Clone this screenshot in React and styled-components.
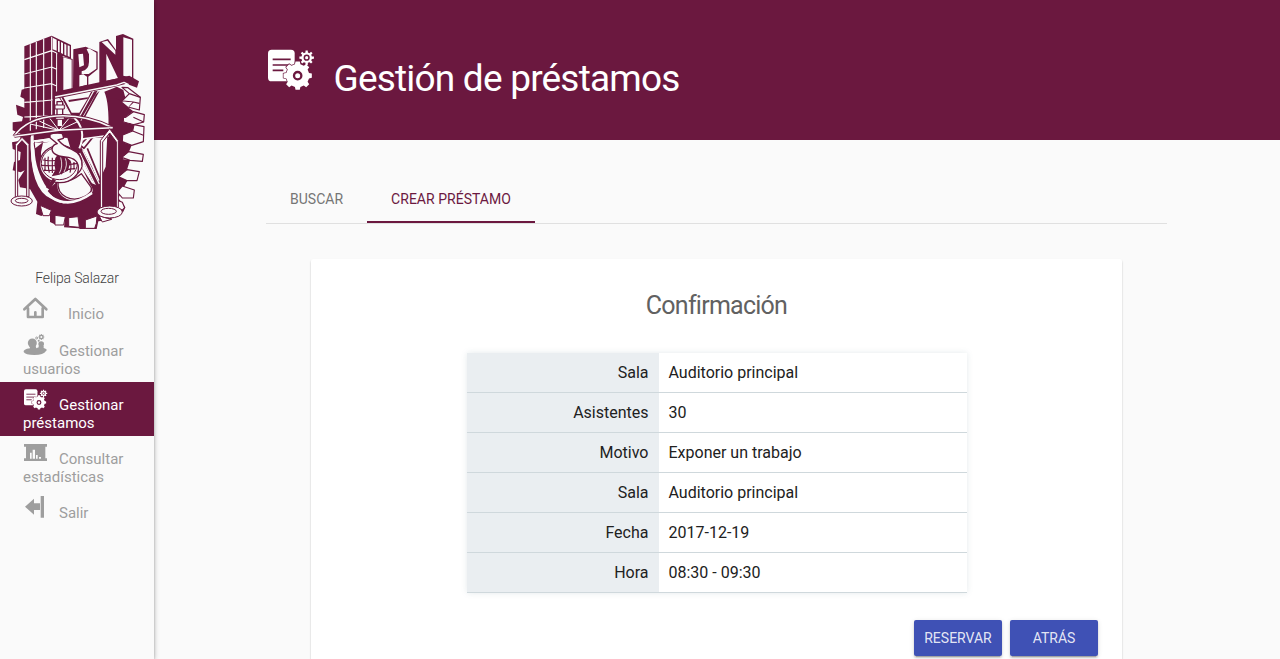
import React from "react";
import styled, { createGlobalStyle } from "styled-components";

const WINE = "#6b183f";
const PAPER = "#fafafa";

const GlobalStyle = createGlobalStyle`
  * { box-sizing: border-box; }
  body {
    margin: 0;
    background: ${PAPER};
    font-family: Roboto, "Liberation Sans", sans-serif;
    overflow: hidden;
  }
`;

const Shell = styled.div`
  display: flex;
  height: 659px;
  overflow: hidden;
`;

const Sidebar = styled.aside`
  position: relative;
  z-index: 1;
  flex: 0 0 154px;
  background: ${PAPER};
  box-shadow: 0 2px 2px 0 rgba(0, 0, 0, 0.14), 0 3px 1px -2px rgba(0, 0, 0, 0.2), 0 1px 5px 0 rgba(0, 0, 0, 0.32);
`;

const Logo = styled.svg`
  display: block;
  width: 135px;
  height: 198px;
  margin: 33px 0 0 10px;
`;

const UserName = styled.div`
  height: 61px;
  padding-top: 38px;
  text-align: center;
  font-size: 14px;
  line-height: 18px;
  font-weight: 300;
  letter-spacing: -0.01em;
  color: #424242;
`;

const NavItem = styled.a`
  display: block;
  padding: 0 0 4px 23px;
  font-size: 15px;
  line-height: 18px;
  color: ${(p) => (p.$active ? "#fff" : "#9e9e9e")};
  background: ${(p) => (p.$active ? WINE : "transparent")};
`;

const NavLine = styled.div`
  display: flex;
  align-items: flex-end;
  height: 32px;
  gap: ${(p) => p.$gap || 12}px;
`;

const NavText = styled.span`
  margin-bottom: ${(p) => p.$lift || 0}px;
`;

const NavIcon = styled.svg`
  width: 24px;
  height: 22px;
  margin-bottom: 4px;
  overflow: visible;
  fill: currentColor;
`;

const Main = styled.main`
  flex: 1;
  min-width: 0;
`;

const Banner = styled.header`
  display: flex;
  align-items: flex-start;
  height: 140px;
  padding: 49px 0 0 114px;
  background: ${WINE};
  color: #fff;
`;

const BannerIcon = styled.svg`
  width: 46px;
  height: 42px;
  overflow: visible;
  fill: currentColor;
`;

const Title = styled.h1`
  margin: 6px 0 0 19.5px;
  font-size: 37px;
  line-height: 48px;
  font-weight: 400;
  letter-spacing: -0.0215em;
`;

const Content = styled.div`
  width: 901px;
  margin: 36px 0 0 112px;
`;

const Tabs = styled.nav`
  display: flex;
  height: 48px;
  border-bottom: 1px solid #e0e0e0;
`;

const Tab = styled.a`
  height: 47px;
  padding: 0 24px;
  font-size: 14px;
  line-height: 47px;
  letter-spacing: 0.02px;
  text-transform: uppercase;
  color: ${(p) => (p.$active ? WINE : "#757575")};
  box-shadow: ${(p) => (p.$active ? `inset 0 -2px 0 ${WINE}` : "none")};
`;

const Card = styled.section`
  width: 811px;
  height: 420px;
  margin: 35px auto 0;
  padding: 29px 24px 0;
  border-radius: 2px;
  background: #fff;
  box-shadow: 0 2px 2px 0 rgba(0, 0, 0, 0.14), 0 3px 1px -2px rgba(0, 0, 0, 0.2), 0 1px 2px 0 rgba(0, 0, 0, 0.12);
`;

const CardTitle = styled.h2`
  margin: 0 0 29px;
  text-align: center;
  font-size: 25px;
  line-height: 36px;
  font-weight: 400;
  letter-spacing: -0.03em;
  color: #616161;
`;

const Details = styled.dl`
  width: 500px;
  margin: 0 auto;
  box-shadow: 0 0 6px rgba(96, 125, 139, 0.16);
`;

const Row = styled.div`
  display: grid;
  grid-template-columns: 192px 1fr;
  grid-template-rows: 39px;
  border-bottom: 1px solid #cfd8dc;
  font-size: 16px;
  line-height: 40px;
  color: #212121;
`;

const Label = styled.dt`
  padding-right: 10px;
  text-align: right;
  background: #eaeef1;
`;

const Value = styled.dd`
  margin: 0;
  padding-left: 10px;
`;

const Actions = styled.div`
  display: flex;
  justify-content: flex-end;
  gap: 8px;
  margin-top: 27px;
`;

const Button = styled.button`
  width: 88px;
  height: 36px;
  padding: 0;
  border: 0;
  border-radius: 2px;
  background: #3f51b5;
  color: rgba(255, 255, 255, 0.87);
  font: 400 14px/36px Roboto, "Liberation Sans", sans-serif;
  text-transform: uppercase;
  box-shadow: 0 2px 2px 0 rgba(0, 0, 0, 0.14), 0 3px 1px -2px rgba(0, 0, 0, 0.2), 0 1px 5px 0 rgba(0, 0, 0, 0.12);
`;

function gearPath(cx, cy, outer, inner, teeth) {
  const pts = [];
  const step = (Math.PI * 2) / teeth;
  for (let i = 0; i < teeth; i++) {
    [[-0.3, inner], [-0.19, outer], [0.19, outer], [0.3, inner]].forEach(([f, r]) => {
      const a = i * step + f * step - Math.PI / 2;
      pts.push(`${(cx + r * Math.cos(a)).toFixed(1)} ${(cy + r * Math.sin(a)).toFixed(1)}`);
    });
  }
  return `M${pts.join("L")}Z`;
}

const LoanArt = () => (
  <>
    <rect x="0" y="2" width="80" height="95" rx="11" />
    <path d="M14 31H68M14 48H60M14 64H46" stroke={WINE} strokeWidth="5" fill="none" />
    <path d={gearPath(89, 80, 43, 35, 8)} stroke={WINE} strokeWidth="4" paintOrder="stroke" />
    <circle cx="89" cy="80" r="11" fill="none" stroke={WINE} strokeWidth="7" />
    <path d={gearPath(116, 26, 22, 16, 8)} />
    <circle cx="116" cy="26" r="7" fill="none" stroke={WINE} strokeWidth="4.5" />
  </>
);

const IpnLogo = () => (
  <Logo viewBox="30 39 405 594" fill={WINE} stroke="none" strokeLinejoin="round">
    {/* gear body */}
    <path d="M75 206L65 209L61 230L75 238V264L48 254L52 284L69 291L66 304L38 307V331L62 342L60 362L36 367L38 387L62 396L60 420L42 426L38 451L62 457L74 451L55 480L60 502L90 507L112 545L108 582L124 588L150 574V606L164 613L195 594L192 622L236 625L240 627H290L295 604L327 600L370 575L376 562L355 535L370 505L382 482L380 450L362 430L380 395L362 330L362 280L384 264L370 210L330 190L165 225Z" />

    {/* right-hand gear teeth in relief */}
    <g fill={PAPER} stroke={WINE} strokeWidth="3.5">
      <path d="M366 202L384 203L421 232L418 270L384 261L366 243L388 221Z" />
      <path d="M377 292L400 275L433 284L431 306L402 314L371 306Z" />
      <path d="M402 314L432 320L430 365L395 376L367 365L368 345L398 333Z" />
      <path d="M365 412L386 395L430 403L427 424L390 421Z" />
      <path d="M356 470L381 449L418 455L411 482H382Z" />
      <path d="M352 516L367 498L403 510L400 534H367Z" />
      <path d="M350 540L367 547L374 563L368 570L351 565Z" />
      <path fill="none" d="M388 221L421 232M370 243L400 246L418 250M400 246L384 261M400 292L431 306M398 333L430 346" />
    </g>
    <path d="M350 236L370 245L384 262L400 274L376 292L370 306L402 314L398 332L368 346L366 366L395 376L387 395L362 416L390 421L381 449L354 470L382 482L367 498L350 516L330 540V236Z" />
    <path d="M366 245L397 247L385 261ZM372 294L400 293L402 312L372 304Z" fill={PAPER} />

    {/* bottom teeth faces */}
    <g fill={PAPER} stroke={WINE} strokeWidth="3">
      <path d="M120 556L154 571L148 587H129ZM165 586L196 590L191 615H165ZM206 593L234 590L238 622L206 619ZM256 600L291 588L289 610L284 625H256ZM297 587L322 595L335 598L307 606Z" />
    </g>

    {/* beams behind the shield */}
    <path fill={PAPER} d="M160 234L360 196L340 205L313 215Q328 250 325 330L326 350L100 365L160 300Z" />
    <path d="M176 232L190 231L215 278H238L262 238L273 216L293 212L241 302L232 312ZM205 240L264 232L262 237L207 246ZM288 222L299 212L256 290L262 300L325 315V350H100L103 318L165 290L230 296L244 302Z" />
    <path fill="none" stroke={PAPER} strokeWidth="3.500" d="M281 213L236 294M182 232L215 292" />

    {/* shield */}
    <path fill={PAPER} d="M92 350Q88 510 155 537Q190 561 247 545L285 510L317 440L322 345Z" />
    <path d="M102 350L106 385L126 369L150 365L102 369ZM100 369L130 364L123 397V428L132 460L152 484L142 505C118 470 105 430 104 390ZM195 330H240C256 345 244 372 245 385L276 440L302 505L276 480L250 420L213 390ZM100 344L322 330V352L250 356L160 352L100 362Z" />
    <path d="M252 385L284 345L270 345L240 375ZM262 385L302 482" fill="none" stroke={WINE} strokeWidth="5" />
    <path d="M242 393L296 500" fill="none" stroke={WINE} strokeWidth="15" />
    <path d="M239 399L289 502M248 391L298 492" fill="none" stroke={PAPER} strokeWidth="3.500" />
    <path d="M100 363L150 358M245 357L312 348" stroke={PAPER} strokeWidth="5" fill="none" />
    <path d="M174 484C170 530 216 548 253 530Q285 513 270 497L244 461Q207 491 174 484Z" fill={PAPER} stroke={WINE} strokeWidth="4" />
    <path d="M150 505L172 484Q168 522 200 537Q230 550 275 525L256 548Q215 562 180 545Q160 535 143 513ZM244 440L276 490L300 500L296 520L272 528Q285 510 270 493Z" />
    <path fill="none" stroke={PAPER} strokeWidth="8" d="M97 345C91 455 120 510 154 531Q208 568 276 519" />
    <path d="M220 290Q262 330 238 385" fill="none" stroke={PAPER} strokeWidth="6" />

    {/* tower */}
    <path d="M73 79L155 47L213 75V117L188 108V216L165 224V292L160 330L73 338Z" />
    <path fill="none" stroke={PAPER} strokeWidth="3.5" d="M91 73V332M109 66V328M131 57V324M155 50V294M73 119L155 92L170 99M73 162L155 141L170 148M73 204L155 191L168 197M73 247L158 240M73 291L160 287M170 99V218" />
    <path fill={PAPER} d="M158 53L170 59V92L158 88ZM174 62L179 64V97L174 95ZM183 66L189 69V102L183 99ZM193 71L199 74V107L193 104ZM203 76L209 78V111L203 108Z" />

    {/* globe and snake */}
    <ellipse cx="180" cy="432" rx="61" ry="56" fill={PAPER} stroke={WINE} strokeWidth="4" />
    <ellipse cx="178" cy="430" rx="54" ry="49" fill="none" stroke={WINE} strokeWidth="3" />
    <path d="M175 402L192 406L212 422L208 437L204 452L178 464L155 469L166 450L163 431L166 414ZM138 502L158 476L168 480L150 510Z" />
    <path fill="none" stroke={WINE} strokeWidth="3.5" d="M124 436Q177 440 235 430M128 420Q163 425 181 419M131 451Q172 453 226 446M135 413V452M145 410Q142 431 148 458M157 413V459M190 420Q195 440 184 463M211 424Q215 438 210 458M222 426V449" />
    <path fill="none" stroke={PAPER} strokeWidth="2.500" d="M182 412Q190 440 178 460M196 415Q204 435 192 456" />
    <path d="M150 343Q160 338 186 340Q192 350 190 355L174 360Q192 380 215 388Q249 402 246 440Q241 456 233 460Q243 420 206 412Q158 409 156 388Q157 374 172 371L150 353Z" fill={PAPER} stroke={WINE} strokeWidth="4" />

    {/* arch and balance */}
    <path d="M171 245H188V320H171Z" fill={PAPER} stroke={WINE} strokeWidth="4" />
    <path d="M165 255H193V267H165ZM167 288H193V298H167Z" fill={PAPER} stroke={WINE} strokeWidth="3" />
    <path fill="none" stroke={WINE} strokeWidth="10" d="M42 349C95 273 230 271 338 323" />
    <path fill="none" stroke={PAPER} strokeWidth="5" d="M42 349C95 273 230 271 338 323" />
    <path fill="none" stroke={WINE} strokeWidth="9" d="M43 349L178 331L338 323" />
    <path fill="none" stroke={PAPER} strokeWidth="4.5" d="M43 349L178 331L338 323" />
    <path fill="none" stroke={PAPER} strokeWidth="3" d="M177 331L90 312M177 331L118 303M177 331L150 296M177 331L206 296M177 331L235 304" />
    <g fill={PAPER} stroke={WINE} strokeWidth="3">
      <path d="M46 373L66 352L87 373V530H80V377L66 362L53 377V533H46Z" />
      <path d="M301 362L329 326L355 361V563H349V366L329 339L308 366V568H301Z" />
      <ellipse cx="65" cy="543" rx="32" ry="15" />
      <ellipse cx="65" cy="542" rx="19" ry="7" />
      <ellipse cx="329" cy="576" rx="38" ry="18" />
      <ellipse cx="326" cy="574" rx="23" ry="9" />
    </g>

    {/* letters standing on the beam */}
    <path d="M172 102L188 110L218 117V210L172 222ZM220 88L257 80L293 95V148L265 170V196L219 208ZM298 66L324 57L348 90V48L369 42L400 56V178L298 200Z" />
    <g fill={PAPER}>
      <path d="M190 112L215 119V206L190 214ZM235 103L249 101L252 136L238 142ZM260 88L267 85L289 98V146L266 162L245 162V154Q266 151 267 126V103ZM238 166L250 163L261 170V194L238 201ZM305 66L322 62L346 92L346 104ZM319 101L354 175L319 182ZM370 52L396 59V173L370 167Z" />
    </g>
    <path d="M163 216L388 167L417 184L411 203L379 191L341 201L163 237Z" />
    <path fill="none" stroke={PAPER} strokeWidth="4" d="M165 231L350 195L372 187L386 194" />
  </Logo>
);

const NAV = [
  {
    first: "Inicio", gap: 21, lift: 1, box: "69 114 72 66",
    art: <path d="M73 148L106 117L139 148M84 145V171H128V145M106 171V157" fill="none" stroke="currentColor" strokeWidth="8" strokeLinejoin="round" strokeLinecap="round" />,
  },
  {
    first: "Gestionar", second: "usuarios", box: "69 222 72 66",
    art: (
      <>
        <circle cx="97" cy="249" r="13.5" />
        <path d="M88 255H106L109 265L116 262V258H131V264Q145 269 138 273Q131 285 103 285Q76 285 71 276Q69 268 90 265Z" />
        <circle cx="123.500" cy="252" r="8.500" />
        <path d={gearPath(124, 231, 9, 7, 8)} />
        <circle cx="124" cy="231" r="3" fill={PAPER} />
        <circle cx="110" cy="234" r="3" fill="none" stroke="currentColor" strokeWidth="3" />
        <circle cx="116" cy="242" r="3" />
      </>
    ),
  },
  {
    first: "Gestionar", second: "préstamos", active: true, box: "69 24 72 66",
    art: <g transform="translate(72 27) scale(.505)"><LoanArt /></g>,
  },
  {
    first: "Consultar", second: "estadísticas", box: "69 186 72 66",
    art: (
      <>
        <path d="M72 192H141V200H136V235H141V243H72V235H78V200H72Z" />
        <path d="M90 218H95V236H90ZM98 209H105V236H98ZM108 225H113V236H108ZM117 231H123V236H117Z" fill={PAPER} />
      </>
    ),
  },
  {
    first: "Salir", box: "69 348 72 66",
    art: <path d="M75 380L102 356V370H120V390H102V404ZM122 348H132V413H122Z" />,
  },
];

const DETAILS = [
  ["Sala", "Auditorio principal"],
  ["Asistentes", "30"],
  ["Motivo", "Exponer un trabajo"],
  ["Sala", "Auditorio principal"],
  ["Fecha", "2017-12-19"],
  ["Hora", "08:30 - 09:30"],
];

export default function App() {
  return (
    <Shell>
      <GlobalStyle />
      <Sidebar>
        <IpnLogo />
        <UserName>Felipa Salazar</UserName>
        {NAV.map((n, i) => (
          <NavItem key={i} $active={n.active}>
            <NavLine $gap={n.gap}>
              <NavIcon viewBox={n.box}>{n.art}</NavIcon>
              <NavText $lift={n.lift}>{n.first}</NavText>
            </NavLine>
            {n.second}
          </NavItem>
        ))}
      </Sidebar>
      <Main>
        <Banner>
          <BannerIcon viewBox="0 0 138 126"><LoanArt /></BannerIcon>
          <Title>Gestión de préstamos</Title>
        </Banner>
        <Content>
          <Tabs>
            <Tab>Buscar</Tab>
            <Tab $active>Crear préstamo</Tab>
          </Tabs>
          <Card>
            <CardTitle>Confirmación</CardTitle>
            <Details>
              {DETAILS.map(([k, v], i) => (
                <Row key={i}>
                  <Label>{k}</Label>
                  <Value>{v}</Value>
                </Row>
              ))}
            </Details>
            <Actions>
              <Button>Reservar</Button>
              <Button>Atrás</Button>
            </Actions>
          </Card>
        </Content>
      </Main>
    </Shell>
  );
}
